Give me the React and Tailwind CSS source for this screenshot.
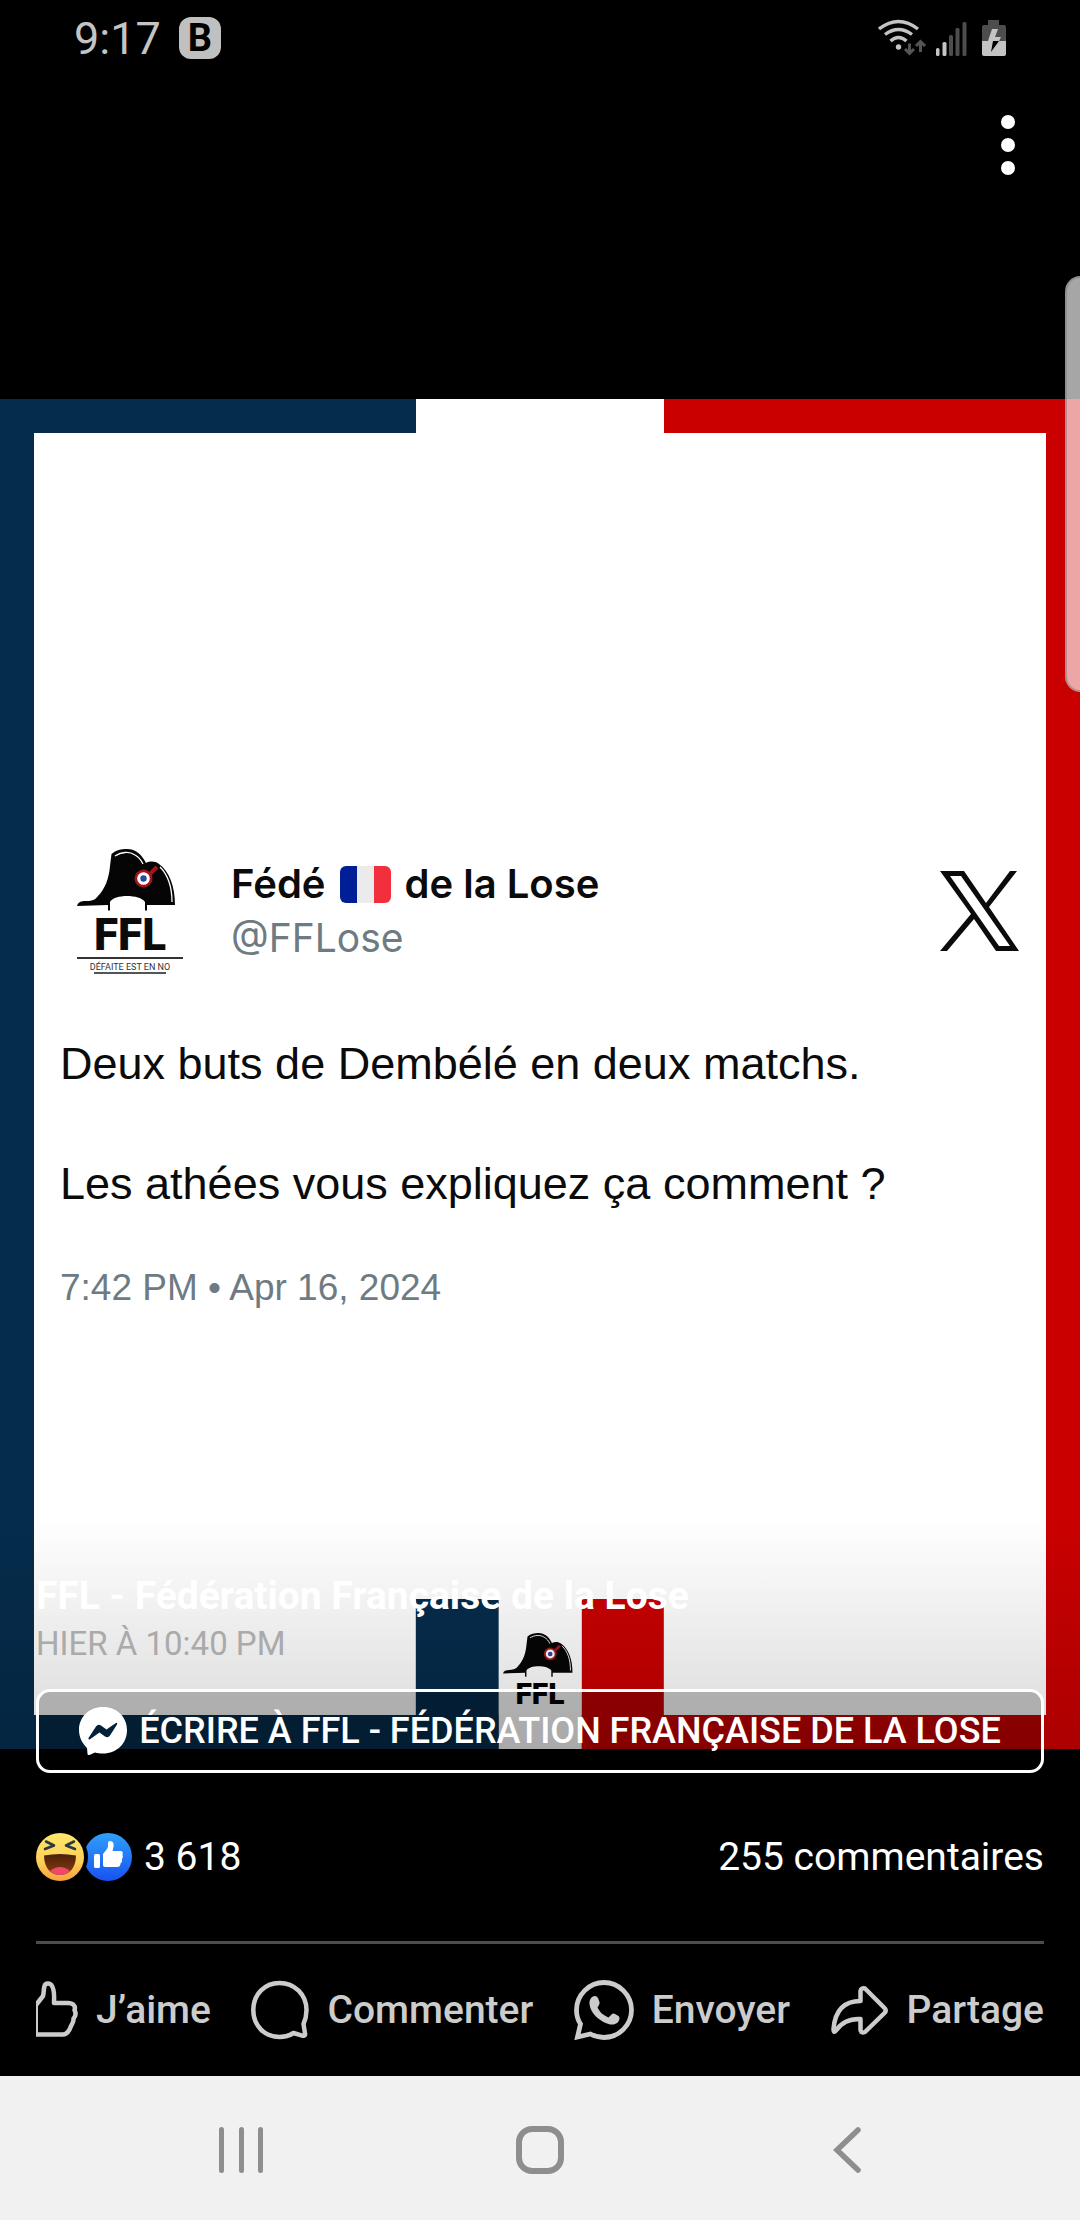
const actions = [
  { label: "J’aime", Icon: LikeIcon },
  { label: "Commenter", Icon: CommentIcon },
  { label: "Envoyer", Icon: WhatsAppIcon },
  { label: "Partage", Icon: ShareIcon },
];

function StatusIcons() {
  return (
    <svg className="h-[38px] w-[130px]" viewBox="878 18 130 38" fill="none" aria-hidden="true">
      <g stroke="#c4c4c4" strokeWidth="3.4">
        <path d="M879 28 Q898.500 13 918 28" />
        <path d="M885 33.500 Q898.500 23.500 912 33.500" />
        <path d="M890.500 40 Q898.500 33 906.500 40" />
      </g>
      <circle cx="898.500" cy="46" r="2.700" fill="#c4c4c4" />
      <g stroke="#555" strokeWidth="3">
        <path d="M909.500 42.500 V52 M905 48 L909.500 52.500 L914 48" />
        <path d="M920.500 51 V41 M916 45 L920.500 40.500 L925 45" />
      </g>
      <rect x="936" y="47" width="3.500" height="8" rx="1.500" fill="#c4c4c4" />
      <rect x="942.500" y="41" width="4" height="14" rx="1.500" fill="#c4c4c4" />
      <rect x="949" y="34" width="4" height="21" rx="1.500" fill="#4d4d4d" />
      <rect x="955.500" y="27" width="4" height="28" rx="1.500" fill="#4d4d4d" />
      <rect x="962.500" y="21" width="4" height="34" rx="1.500" fill="#4d4d4d" />
      <path d="M988 19 h11 v5 h5 q2 0 2 2 v14 h-24 v-14 q0-2 2-2 h4z" fill="#4d4d4d" />
      <path d="M982 40 h24 v13 q0 2-2 2 h-20 q-2 0-2-2z" fill="#c4c4c4" />
      <path d="M992 28 h6 l-3 8 h6 l-2 4 h-11z" fill="#c4c4c4" />
      <path d="M993 40 h6 l-8 11z" fill="#000" />
    </svg>
  );
}

function Hat({ className }) {
  return (
    <svg className={className} viewBox="0 0 98 62" aria-hidden="true">
      <path
        d="M0 57 C1 53 4 52 9 52 C16 52 19 50 21 47 C28 40 32 29 33 17 L34.500 5 C39 1 44 0 50 0 C59 0 65 6 69 14 C73 12 78 12 82 15 C92 22 98 37 98 56 H70 V61.500 H68 V53 C63 45 37 45 33 53 V61.500 H31 V56Z"
        fill="#050505"
      />
      <path d="M38 7 C44 3 52 2 58 6 C62 8 64 11 66 15 M83 18 C91 26 95 37 95 53" stroke="#fff" strokeWidth="1.300" fill="none" />
      <path d="M70 28 L80 18" stroke="#a5141c" strokeWidth="4" />
      <circle cx="66.500" cy="29.500" r="9" fill="#a5141c" />
      <circle cx="66.500" cy="29.500" r="6.300" fill="#fff" />
      <circle cx="66.500" cy="29.500" r="3.200" fill="#2b4a96" />
    </svg>
  );
}

function XLogo() {
  return (
    <svg className="h-20 w-20" viewBox="0 0 80 80" aria-label="X">
      <path
        fillRule="evenodd"
        fill="#0b0b0b"
        d="M0 0 H24 L46 32 L70 0 H77 L49 36 L79 80 H56 L34 48 L7 80 H0 L31 43Z M10 5 L59 75 H70 L21 5Z"
      />
    </svg>
  );
}

function MessengerIcon() {
  return (
    <svg className="h-12 w-12" viewBox="0 0 48 48" aria-hidden="true">
      <path d="M24 0 C10 0 0 10 0 23 C0 30 3 36 8 41 L8.500 47 Q9 48.500 10.500 48 L16 45.500 C18.500 46.300 21 46.500 24 46.500 C38 46.500 48 36.500 48 23 C48 10 38 0 24 0Z" fill="#fff" />
      <path d="M9.500 31 L17 19.500 Q19 16.500 22 18.500 L27.500 22.500 L36.500 16.300 Q39 15 38 17.500 L31 28.500 Q29 31.500 26 29.500 L20.500 25.500 L11 32.200 Q9 33 9.500 31Z" fill="#03203a" />
    </svg>
  );
}

function HahaIcon() {
  return (
    <svg className="size-12" viewBox="0 0 48 48" aria-label="Haha">
      <defs>
        <linearGradient id="haha" x2="0" y2="1">
          <stop stopColor="#ffe76b" />
          <stop offset=".6" stopColor="#fdcf58" />
          <stop offset="1" stopColor="#f7a23b" />
        </linearGradient>
        <linearGradient id="mouth" x2="0" y2="1">
          <stop stopColor="#4a210c" />
          <stop offset="1" stopColor="#8b3b0c" />
        </linearGradient>
      </defs>
      <circle cx="24" cy="24" r="24" fill="url(#haha)" />
      <path d="M8 22.500 Q24 19.500 40 22.500 C40 35 33 42 24 42 C15 42 8 35 8 22.500Z" fill="url(#mouth)" />
      <path d="M14 38 Q24 30 34 38 Q30 42 24 42 Q18 42 14 38Z" fill="#ee4968" />
      <path d="M10 8.500 L18 12.500 L9 16 M38 8.500 L30 12.500 L39 16" fill="none" stroke="#2c3a3f" strokeWidth="2.600" strokeLinecap="round" strokeLinejoin="round" />
    </svg>
  );
}

function LikeBadge() {
  return (
    <svg className="size-12" viewBox="0 0 48 48" aria-label="J’aime">
      <defs>
        <linearGradient id="like" x2="0" y2="1">
          <stop stopColor="#2fa0fb" />
          <stop offset="1" stopColor="#1752f2" />
        </linearGradient>
      </defs>
      <circle cx="24" cy="24" r="24" fill="url(#like)" />
      <circle cx="-24" cy="24" r="28" fill="#000" />
      <rect x="10" y="21" width="6" height="14" rx="1.500" fill="#fff" />
      <path d="M19 21 C21 18 24 16 24 13 V10 Q24 8 26 8 C30 8 30.500 12 28.500 18 H37 Q39.500 18.500 38.500 21.500 Q39.500 24 38 26 Q38.500 29 36.500 30.500 Q36.500 34 33 34 H21 Q19 34 19 32Z" fill="#fff" />
    </svg>
  );
}

function LikeIcon() {
  return (
    <svg className="h-[60px] w-[42px]" viewBox="0 0 42 60" fill="none" aria-hidden="true">
      <path d="M1 24 V55" stroke="#cccccc" strokeWidth="2" />
      <path
        d="M0 25 L7 16 C8 13 7.500 9 8.500 6 C9.500 3 14 2.500 16 6 C19 11 18 17 18 23 H32 C37 23 40 26 38.500 30 C40 33 40 36 37.500 38.500 C38 42 36 44 35 46 C33 52 31 54.500 27 54.500 H0"
        stroke="#cccccc"
        strokeWidth="4.500"
        strokeLinejoin="round"
      />
    </svg>
  );
}

function CommentIcon() {
  return (
    <svg className="h-[60px] w-[58px]" viewBox="0 0 58 60" fill="none" aria-hidden="true">
      <path
        d="M52.500 44 C54.500 39.500 55.500 35 55.500 30 C55.500 14.500 43.500 3 28.500 3 C13.500 3 2.300 14.500 2.300 30 C2.300 45.500 13.500 57 28.500 57 C33.500 57 38.500 55.500 42.500 53 L52 55.800 Q54.500 56 54 53.500Z"
        stroke="#cccccc"
        strokeWidth="4.500"
        strokeLinejoin="round"
      />
    </svg>
  );
}

function WhatsAppIcon() {
  return (
    <svg className="size-[60px]" viewBox="0 0 60 60" fill="none" aria-hidden="true">
      <path d="M6.500 44 C3.500 39.500 2.500 35 2.500 30 C2.500 15 15 2.500 30 2.500 C45 2.500 57.500 15 57.500 30 C57.500 45 45 57.500 30 57.500 C25 57.500 21 56.500 16.500 54 L3.500 57Z" stroke="#cccccc" strokeWidth="4.800" />
      <path
        d="M18 17 Q22 14.500 24 18 L25.500 22 Q26 24 23.500 27.500 C26 32.500 29 35 34.500 37.500 L37.500 34.500 Q39 33 41 34 L44.500 36 Q46.500 38 44.500 41.500 C41 46 35 45 29.500 42 C22 38 16 31 15.500 24 Q15 20 18 17Z"
        fill="#cccccc"
      />
    </svg>
  );
}

function ShareIcon() {
  return (
    <svg className="h-[60px] w-[58px]" viewBox="0 0 58 60" fill="none" aria-hidden="true">
      <path
        d="M29.500 20 V11 Q30 7.500 34 8.500 L53.500 28 Q56 30.500 53.500 33 L34 52 Q30 53.500 29.500 50 V39 C18 38.500 11 42 5.500 50 Q2.500 54 2.500 49 C4 31 12 21 29.500 21Z"
        stroke="#cccccc"
        strokeWidth="4.500"
        strokeLinejoin="round"
      />
    </svg>
  );
}

function Post() {
  return (
    <article className="flex flex-1 flex-col justify-center px-[26px] pt-[10px] text-[#0b0b0b]">
      <header className="flex items-center gap-12 pl-[17px] font-['Inter',sans-serif]">
        <div className="flex w-[106px] flex-col items-center">
          <Hat className="mr-2 h-[62px] w-[98px]" />
          <p className="mt-[2px] font-['Roboto',sans-serif] text-[44px] font-black leading-[44px]">FFL</p>
          <div className="w-full border-t-2 border-[#333] pt-[3px] text-center">
            <p className="whitespace-nowrap font-['Roboto',sans-serif] text-[9px] leading-[10px] text-[#333]">DÉFAITE EST EN NO</p>
            <div className="mx-auto w-[72px] border-t-2 border-[#555]" />
          </div>
        </div>
        <div className="flex-1">
          <h1 className="flex items-center gap-[14px] text-[40px] font-semibold leading-[54px]">
            <span>Fédé</span>
            <span className="grid h-[37px] w-[51px] grid-cols-3 overflow-hidden rounded-md" role="img" aria-label="France">
              <span className="bg-[#001e96]" />
              <span className="bg-[#ebebeb]" />
              <span className="bg-[#f22f3c]" />
            </span>
            <span>de la Lose</span>
          </h1>
          <p className="text-[39px] leading-[54px] text-[#6e7b83]">@FFLose</p>
        </div>
        <XLogo />
      </header>
      <p className="mt-[60px] whitespace-pre-line font-['Liberation_Sans',sans-serif] text-[45px] leading-[60px]">
        {"Deux buts de Dembélé en deux matchs.\n\nLes athées vous expliquez ça comment ?"}
      </p>
      <time className="mt-[52px] font-['Liberation_Sans',sans-serif] text-[37px] leading-[44px] text-[#6e7b83]">7:42 PM • Apr 16, 2024</time>
    </article>
  );
}

export default function App() {
  return (
    <div className="relative flex min-h-screen flex-col overflow-hidden bg-black font-['Roboto',sans-serif]">
      <div className="flex h-[76px] items-center justify-between pl-[74px] pr-[72px]">
        <div className="flex items-center gap-[18px] text-[45px] leading-none text-[#c4c4c4]">
          <span>9:17</span>
          <span className="flex size-[42px] items-center justify-center rounded-xl bg-[#c0c0c0] text-[38px] font-bold text-black">B</span>
        </div>
        <StatusIcons />
      </div>

      <div className="flex h-[323px] items-start justify-end pr-[65px] pt-[39px]">
        <button aria-label="Plus d’options" className="flex flex-col gap-[9px]">
          <span className="size-[14px] rounded-full bg-white" />
          <span className="size-[14px] rounded-full bg-white" />
          <span className="size-[14px] rounded-full bg-white" />
        </button>
      </div>

      <div className="relative flex aspect-[4/5] flex-col bg-[linear-gradient(to_right,#052c4c_50%,#ca0000_50%)]">
        <div className="mx-auto h-[34px] w-[23%] bg-white" />
        <div className="mx-[34px] mb-[34px] flex flex-1 flex-col bg-white">
          <Post />
        </div>
        <div className="absolute bottom-0 left-1/2 grid h-[150px] w-[23%] -translate-x-1/2 grid-cols-3">
          <div className="bg-[#052c4c]" />
          <div className="flex flex-col items-center bg-white pt-[34px]">
            <Hat className="mr-1 h-11 w-[70px]" />
            <p className="mt-[2px] text-[30px] font-black leading-[30px] text-black">FFL</p>
          </div>
          <div className="bg-[#ca0000]" />
        </div>
        <div className="absolute inset-x-0 bottom-0 h-[230px] bg-linear-to-b from-black/0 to-black/15" />
      </div>

      <section className="relative -mt-[177px] flex flex-1 flex-col px-9">
        <h2 className="text-[39px] font-bold leading-[48px] text-white">FFL - Fédération Française de la Lose</h2>
        <p className="text-[33px] leading-[48px] text-[#aaaaaa]">HIER À 10:40 PM</p>
        <button className="mt-[21px] flex h-[84px] items-center justify-center gap-3 rounded-[14px] border-3 border-white bg-black/22 text-[36px] font-medium leading-[40px] text-white">
          <MessengerIcon />
          ÉCRIRE À FFL - FÉDÉRATION FRANÇAISE DE LA LOSE
        </button>
        <div className="mt-[60px] flex h-12 items-center text-[39px] text-white">
          <HahaIcon />
          <LikeBadge />
          <span className="ml-3">3 618</span>
          <span className="ml-auto">255 commentaires</span>
        </div>
        <div className="mt-[60px] flex justify-between border-t-3 border-[#4d4d4d] py-9">
          {actions.map(({ label, Icon }) => (
            <button key={label} className="flex items-center gap-[18px] whitespace-nowrap text-[39px] font-medium leading-[60px] text-[#cccccc]">
              <Icon />
              {label}
            </button>
          ))}
        </div>
      </section>

      <nav className="flex h-36 items-center justify-between bg-[#f1f1f1] px-[217px] pt-1">
        <button aria-label="Applications récentes" className="flex h-[46px] w-12 justify-between px-[2px]">
          <span className="w-[5px] rounded bg-[#8e8e8e]" />
          <span className="w-[5px] rounded bg-[#8e8e8e]" />
          <span className="w-[5px] rounded bg-[#8e8e8e]" />
        </button>
        <button aria-label="Accueil" className="size-12 rounded-2xl border-6 border-[#8e8e8e]" />
        <button aria-label="Retour" className="flex w-12 justify-end">
          <svg className="h-[46px] w-[30px]" viewBox="0 0 30 46" fill="none" aria-hidden="true">
            <path d="M25 3 L4 23 L25 43" stroke="#8e8e8e" strokeWidth="5.500" strokeLinecap="round" />
          </svg>
        </button>
      </nav>

      <div className="absolute -right-4 top-[276px] h-[416px] w-[31px] rounded-2xl border-2 border-[#777777]/50 bg-white/65" />
    </div>
  );
}
